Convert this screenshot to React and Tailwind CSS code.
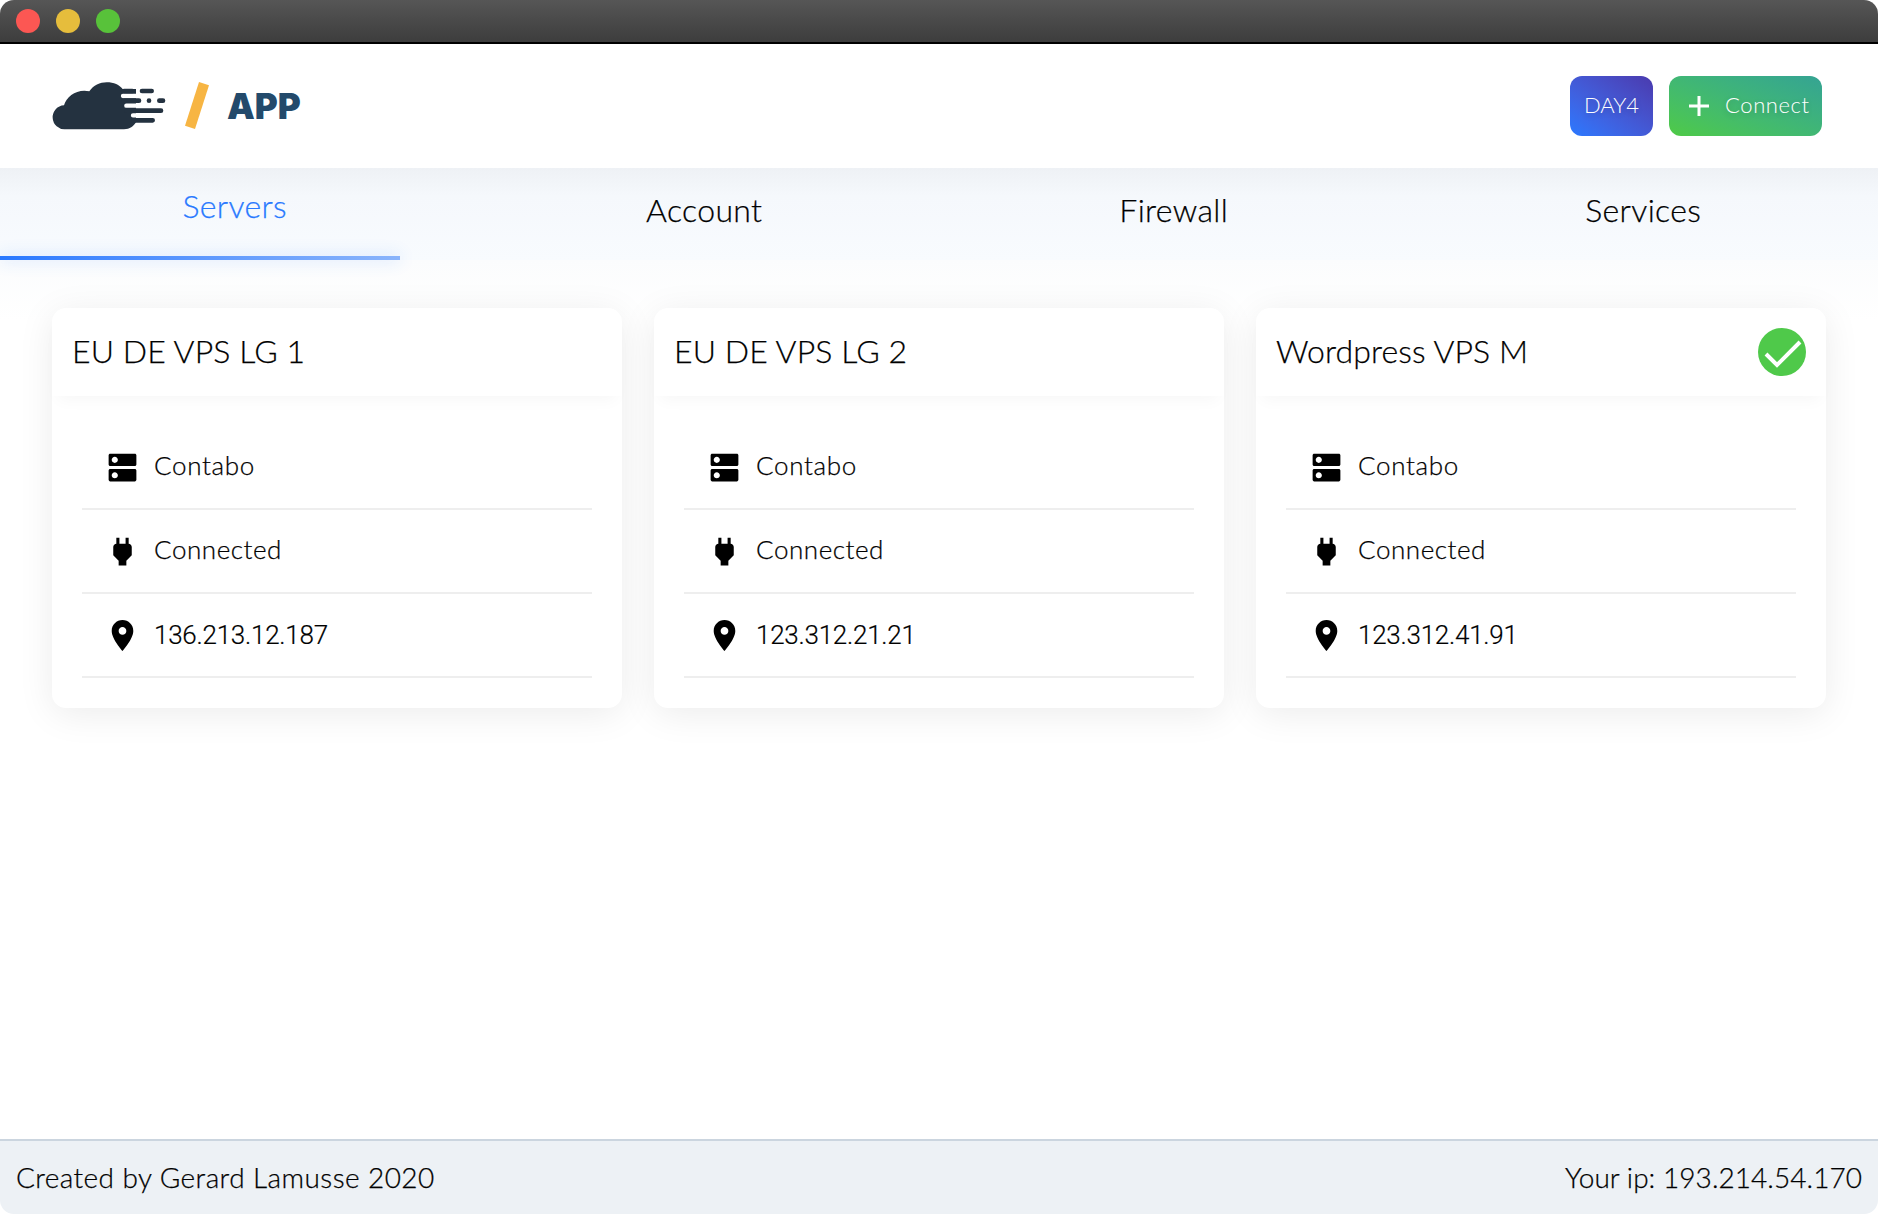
const servers = [
  { name: 'EU DE VPS LG 1', host: 'Contabo', status: 'Connected', ip: '136.213.12.187' },
  { name: 'EU DE VPS LG 2', host: 'Contabo', status: 'Connected', ip: '123.312.21.21' },
  { name: 'Wordpress VPS M', host: 'Contabo', status: 'Connected', ip: '123.312.41.91', active: true },
]

const tabs = ['Servers', 'Account', 'Firewall', 'Services']

function ServerIcon() {
  return (
    <svg className="w-[37px] h-[37px] shrink-0" viewBox="0 0 24 24" fill="#000">
      <path d="M20 13H4c-.55 0-1 .45-1 1v6c0 .55.45 1 1 1h16c.55 0 1-.45 1-1v-6c0-.55-.45-1-1-1zM7 19c-1.1 0-2-.9-2-2s.9-2 2-2 2 .9 2 2-.9 2-2 2zM20 3H4c-.55 0-1 .45-1 1v6c0 .55.45 1 1 1h16c.55 0 1-.45 1-1V4c0-.55-.45-1-1-1zM7 9c-1.1 0-2-.9-2-2s.9-2 2-2 2 .9 2 2-.9 2-2 2z" />
    </svg>
  )
}

function PlugIcon() {
  return (
    <svg className="w-[37px] h-[37px] shrink-0" viewBox="0 0 24 24" fill="#000">
      <path d="M16 7V3h-2v4h-4V3H8v4C7 7 6 8 6 9v5.5L9.500 18v3h5v-3l3.500-3.500V9c0-1-1-2-2-2z" />
    </svg>
  )
}

function PinIcon() {
  return (
    <svg className="w-[37px] h-[37px] shrink-0" viewBox="0 0 24 24" fill="#000">
      <path d="M12 2C8.130 2 5 5.130 5 9c0 5.250 7 13 7 13s7-7.750 7-13c0-3.870-3.130-7-7-7zm0 9.500c-1.380 0-2.500-1.120-2.500-2.500s1.120-2.500 2.500-2.500 2.500 1.120 2.500 2.500-1.120 2.500-2.500 2.500z" />
    </svg>
  )
}

function Logo() {
  return (
    <svg className="w-[120px] h-[52px] shrink-0" viewBox="150 240 360 156">
      <path d="M196 388a36 36 0 0 1-4-72c8-28 40-50 76-42c12-18 32-27 52-27c22 0 38 8 48 20h40v100c-8 12-18 21-36 21z" fill="#243240" />
      <g stroke="#fff" strokeWidth="13" strokeLinecap="round">
        <path d="M369 288H510M379 317H510M399 346H510" />
      </g>
      <g stroke="#243240" strokeWidth="14" strokeLinecap="round" fill="none">
        <path d="M372 273H397M426 273H455M372 302H417M478 302H489M380 332H483M400 361H458" />
      </g>
      <circle cx="447" cy="302" r="7" fill="#243240" />
    </svg>
  )
}

function Card({ server }) {
  return (
    <div className="bg-white rounded-[14px] h-[400px] shadow-[0_6px_36px_rgba(0,0,0,0.08)]">
      <div className="h-[88px] px-5 flex items-center justify-between rounded-t-[14px] shadow-[0_10px_16px_-6px_rgba(0,0,0,0.035)]">
        <h2 className="mb-[2px] text-[32px] text-black font-light tracking-[0.1px] leading-none [-webkit-text-stroke:0.25px_black]">{server.name}</h2>
        {server.active && (
          <svg className="w-12 h-12" viewBox="0 0 48 48">
            <circle cx="24" cy="24" r="24" fill="#4fc94a" />
            <path d="M8 26l11 11 23-23" fill="none" stroke="#fff" strokeWidth="4" />
          </svg>
        )}
      </div>
      <ul className="mt-[30px] mx-[30px]">
        <li className="h-[84px] border-b-2 border-[#eeeeee] flex items-center pl-[22px] gap-[13px]">
          <ServerIcon />
          <span className="pb-1 text-[26px] text-black font-light tracking-[0.65px] [-webkit-text-stroke:0.25px_black]">{server.host}</span>
        </li>
        <li className="h-[84px] border-b-2 border-[#eeeeee] flex items-center pl-[22px] gap-[13px]">
          <PlugIcon />
          <span className="pb-1 text-[26px] text-black font-light tracking-[0.55px] [-webkit-text-stroke:0.25px_black]">{server.status}</span>
        </li>
        <li className="h-[84px] border-b-2 border-[#eeeeee] flex items-center pl-[22px] gap-[13px]">
          <PinIcon />
          <span className="text-[26px] text-black font-light tracking-[-0.25px] [-webkit-text-stroke:0.2px_black] font-['Roboto',sans-serif]">{server.ip}</span>
        </li>
      </ul>
    </div>
  )
}

export default function App() {
  return (
    <div className="h-[1214px] flex flex-col bg-white rounded-[14px] overflow-hidden font-['Lato',sans-serif]">
      {/* Window bar */}
      <div className="h-[44px] shrink-0 flex items-center gap-4 pl-4 border-b-2 border-black bg-gradient-to-b from-[#565656] to-[#3d3d3d]">
        <span className="w-6 h-6 rounded-full bg-[#fc5753]" />
        <span className="w-6 h-6 rounded-full bg-[#e6bd3c]" />
        <span className="w-6 h-6 rounded-full bg-[#58c23a]" />
      </div>

      {/* Header */}
      <header className="h-[124px] shrink-0 flex items-center justify-between pl-[50px] pr-[56px]">
        <div className="flex items-center">
          <Logo />
          <svg className="w-6 h-[48px] ml-[15px]" viewBox="0 0 24 48">
            <path d="M14 0l10 3.300L10 47 0 43.700z" fill="#f7b543" />
          </svg>
          <span className="ml-[18px] text-[35px] leading-none font-black text-[#234a6b] font-['Inter',sans-serif]">APP</span>
        </div>
        <div className="flex items-center gap-4">
          <button className="h-[60px] w-[83px] pb-1 rounded-[12px] bg-gradient-to-tr from-[#2979ff] to-[#4a3aae] text-white text-[22px] font-light [text-shadow:0_2px_6px_rgba(0,0,0,0.2)]">
            DAY4
          </button>
          <button className="h-[60px] w-[153px] rounded-[12px] bg-gradient-to-tr from-[#4fca44] to-[#35a393] text-white text-[22px] font-light tracking-[0.6px] flex items-center pl-5 gap-4 [text-shadow:0_2px_6px_rgba(0,0,0,0.2)]">
            <svg className="w-5 h-5 shrink-0" viewBox="0 0 20 20">
              <path d="M10 0v20M0 10h20" stroke="#fff" strokeWidth="3" />
            </svg>
            <span className="pb-1">Connect</span>
          </button>
        </div>
      </header>

      {/* Tabs */}
      <nav className="h-[92px] shrink-0 grid grid-cols-4 relative bg-gradient-to-b from-[#eef1f5] via-[#f5f8fc] via-30% to-[#f8fbfe]">
        {tabs.map((tab, index) => (
          <div
            key={tab}
            className={
              index === 0
                ? 'flex items-center justify-center pb-[16px] text-[32px] font-light tracking-[0.35px] text-[#2979ff] [-webkit-text-stroke:0.25px_#2979ff]'
                : 'flex items-center justify-center pb-[8px] text-[32px] font-light tracking-[0.35px] text-black [-webkit-text-stroke:0.25px_black]'
            }
          >
            {tab}
          </div>
        ))}
        <div className="absolute left-0 bottom-0 w-[400px] h-[4px] bg-gradient-to-r from-[#2979ff] to-[#8ab4fb] shadow-[0_0_16px_rgba(41,121,255,0.3)]" />
      </nav>

      {/* Server cards */}
      <main className="flex-1 px-[52px] pt-[48px] bg-gradient-to-b from-[#fbfcfd] to-white to-[60px]">
        <div className="grid grid-cols-3 gap-8">
          {servers.map((server) => (
            <Card key={server.name} server={server} />
          ))}
        </div>
      </main>

      {/* Footer */}
      <footer className="h-[75px] shrink-0 border-t-2 border-[#cbd5df] bg-[#edf1f5] flex items-center justify-between px-4 pb-[2px] text-[28px] font-light text-black [-webkit-text-stroke:0.25px_black]">
        <span className="tracking-[0.42px]">Created by Gerard Lamusse 2020</span>
        <span className="tracking-[0.05px]">Your ip: 193.214.54.170</span>
      </footer>
    </div>
  )
}
